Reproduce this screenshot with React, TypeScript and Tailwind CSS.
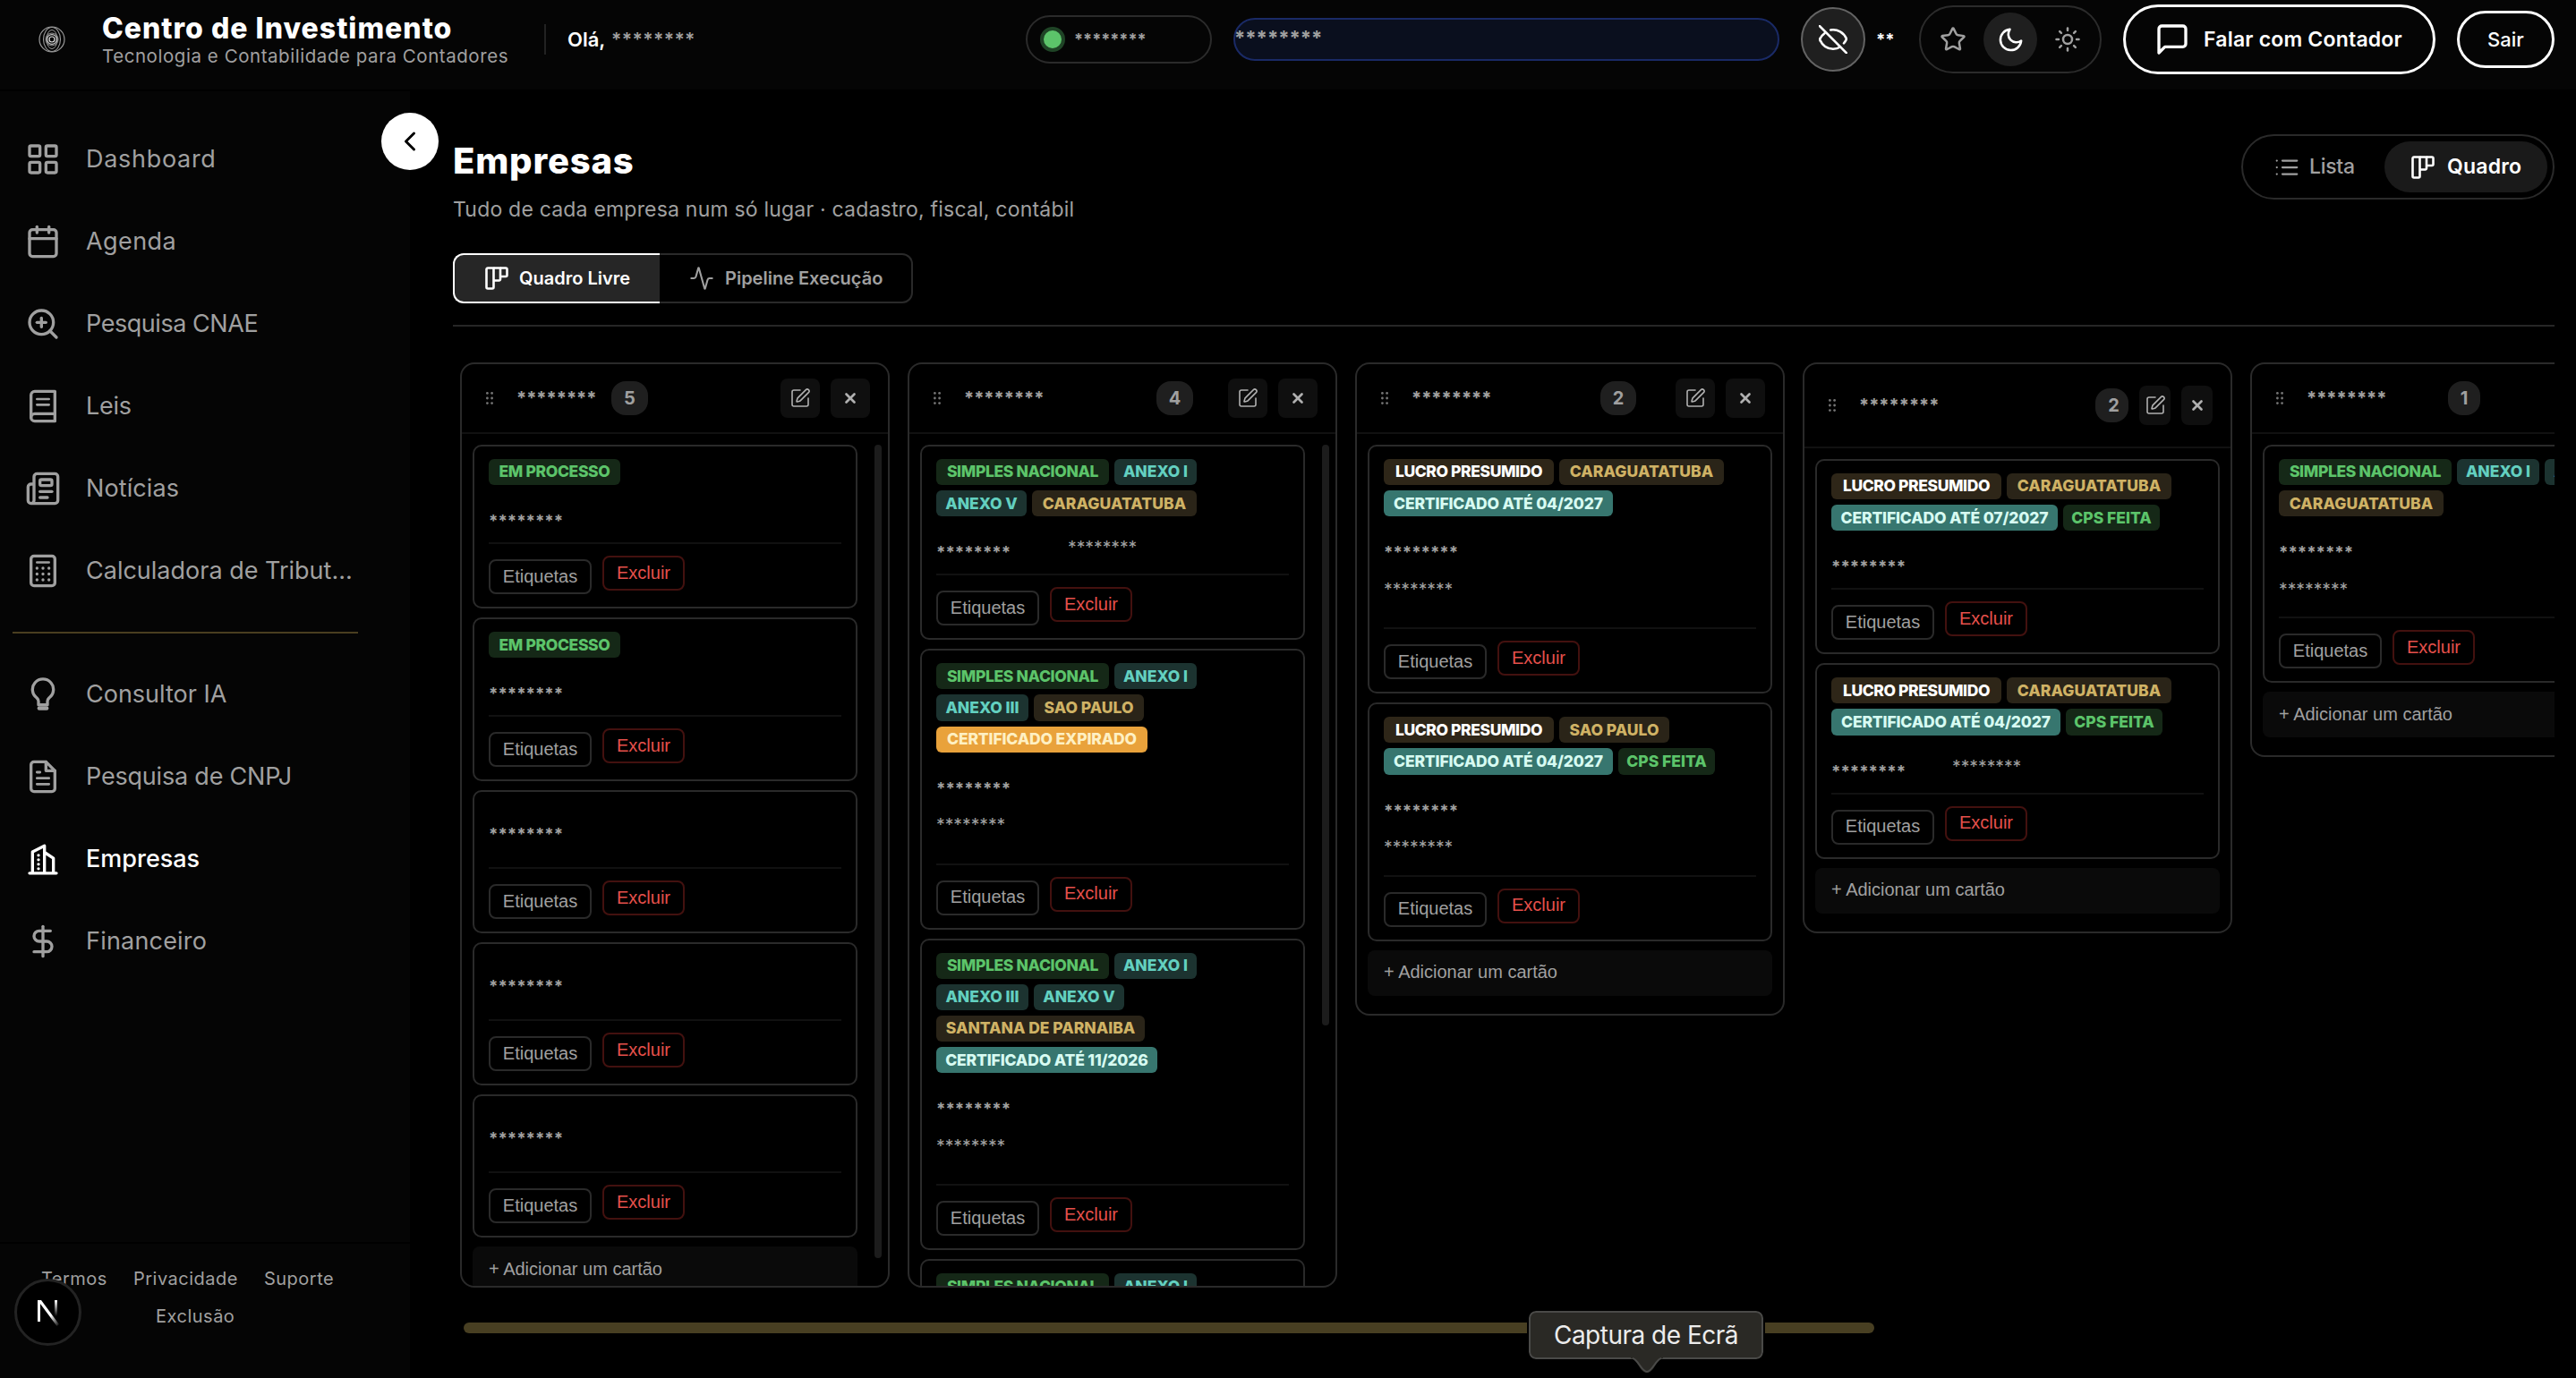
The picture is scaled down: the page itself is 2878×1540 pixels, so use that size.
import type { ReactNode } from 'react';
import {
  Activity,
  Calendar,
  ChevronLeft,
  DollarSign,
  LayoutGrid,
  Newspaper,
  SquarePen,
  Star,
  Sun,
  X,
  ZoomIn,
} from 'lucide-react';
import clsx from 'clsx';

interface IconProps {
  className?: string;
  strokeWidth?: number;
  children?: ReactNode;
}

function StrokeIcon({ className, strokeWidth = 2, children }: IconProps) {
  return (
    <svg
      viewBox="0 0 24 24"
      fill="none"
      stroke="currentColor"
      strokeWidth={strokeWidth}
      strokeLinecap="round"
      strokeLinejoin="round"
      className={clsx('shrink-0', className)}
    >
      {children}
    </svg>
  );
}

const BookIcon = () => (
  <StrokeIcon className="size-10">
    <path d="M4 19.5A2.5 2.5 0 0 1 6.5 17H20" />
    <path d="M6.5 2H20v20H6.5A2.5 2.5 0 0 1 4 19.5v-15A2.5 2.5 0 0 1 6.5 2z" />
    <path d="M8 7.2h8M8 11h8" strokeWidth={1.6} />
  </StrokeIcon>
);

const CalculatorIcon = () => (
  <StrokeIcon className="size-10">
    <rect x="4" y="2" width="16" height="20" rx="2" />
    <path d="M8 6.3h8" strokeWidth={1.6} />
    <path d="M8 10.2h.01M12 10.2h.01M16 10.2h.01M8 14.1h.01M12 14.1h.01M16 14.1h.01M8 18h.01M12 18h.01M16 18h.01" />
  </StrokeIcon>
);

const BulbIcon = () => (
  <StrokeIcon className="size-10">
    <path d="M9 19v-2.4c0-.9-.5-1.6-1.1-2.2a7 7 0 1 1 8.2 0c-.6.6-1.1 1.3-1.1 2.2V19z" />
    <path d="M9.5 21.3h5" strokeWidth={2.6} />
  </StrokeIcon>
);

const FileIcon = () => (
  <StrokeIcon className="size-10">
    <path d="M14 2H6a2 2 0 0 0-2 2v16a2 2 0 0 0 2 2h12a2 2 0 0 0 2-2V8z" />
    <path d="M14 2v6h6" />
    <path d="M16 13H8M16 17H8M10 9H8" strokeWidth={1.7} />
  </StrokeIcon>
);

const BuildingIcon = () => (
  <StrokeIcon className="size-10">
    <path d="M3 21.5h18M5 21V7.2l8-4V21M19 21V11.5l-6-4" />
    <path d="M9 9.5v.01M9 12.5v.01M9 15.5v.01M9 18.5v.01" />
  </StrokeIcon>
);

const BoardIcon = () => (
  <svg
    viewBox="0 0 26 26"
    fill="none"
    stroke="currentColor"
    strokeWidth={2.6}
    strokeLinejoin="round"
    className="size-[26px] shrink-0"
  >
    <path d="M1.5 3A1.5 1.5 0 0 1 3 1.5h6.5V23A1.5 1.5 0 0 1 8 24.5H3A1.5 1.5 0 0 1 1.5 23z" />
    <path d="M9.5 1.5H17V14a1.5 1.5 0 0 1-1.5 1.5h-6" />
    <path d="M17 1.5h6A1.5 1.5 0 0 1 24.500 3v6.5A1.5 1.5 0 0 1 23 11h-6" />
  </svg>
);

const ListIcon = () => (
  <StrokeIcon className="size-[30px]" strokeWidth={1.8}>
    <path d="M8 6h13M8 12h13M8 18h13M3 6h.01M3 12h.01M3 18h.01" />
  </StrokeIcon>
);

const EyeOffIcon = () => (
  <svg
    viewBox="0 0 32 32"
    fill="none"
    stroke="currentColor"
    strokeWidth={2.6}
    strokeLinecap="round"
    className="size-8"
  >
    <path d="M13.2 5.5C21 4.2 28 8.500 31 15.500c-.7 2-1.700 3.500-3 4.800" />
    <path d="M6.5 9.2C4 11 2 13.200 1 16c3.200 7.200 8 10.700 15 10.700 3 0 5.600-.7 8-2.200" />
    <path d="M.8 1 31.2 31.500" />
  </svg>
);

const Logo = () => (
  <svg viewBox="0 0 30 30" fill="none" stroke="#9a9a9a" className="size-[30px] shrink-0">
    <circle cx="15" cy="15" r="14" strokeWidth="1.2" />
    <ellipse cx="15" cy="15" rx="9.5" ry="13.5" strokeWidth="1.1" />
    <ellipse cx="15" cy="15" rx="6" ry="10.5" strokeWidth="1" />
    <circle cx="15" cy="15" r="7" strokeWidth="1" />
    <circle cx="15" cy="15" r="5.4" stroke="#d0d0d0" strokeWidth="1.2" />
    <circle cx="15" cy="15" r="3" stroke="#e0e0e0" strokeWidth="1.2" />
  </svg>
);

const Grip = () => (
  <svg viewBox="0 0 8 14" className="h-[14px] w-2 fill-[#757575]">
    {[1.4, 7, 12.6].map((y) => (
      <g key={y}>
        <circle cx="1.4" cy={y} r="1.4" />
        <circle cx="6.6" cy={y} r="1.4" />
      </g>
    ))}
  </svg>
);

const MASK = '********';

function Header() {
  return (
    <header className="h-[100px] shrink-0 bg-[#050505]">
      <div className="flex h-[88px] items-center pr-6 pl-[43px]">
        <Logo />
        <div className="ml-[41px] w-[454px] whitespace-nowrap">
          <div className="text-[32px] leading-[38px] font-extrabold tracking-[1px] text-white">
            Centro de Investimento
          </div>
          <div className="text-[20.5px] leading-6 tracking-[0.55px] text-[#a0a0a0]">
            Tecnologia e Contabilidade para Contadores
          </div>
        </div>
        <div className="ml-10 h-[34px] w-0.5 bg-[#222]" />
        <div className="ml-6 w-[49px] text-[22px] font-semibold text-white">Olá,</div>
        <span className="text-[21px] leading-none font-semibold tracking-[0.4px] text-[#a0a0a0]">
          {MASK}
        </span>

        <div className="ml-auto flex items-center gap-6">
          <div className="flex h-[54px] w-[208px] items-center rounded-full border-2 border-[#2b2b2b] pl-3.5">
            <div className="size-7 rounded-full border-4 border-[#1f4426] bg-[#5cc46a]" />
            <span className="ml-2.5 text-[18px] leading-none font-bold text-[#a0a0a0]">{MASK}</span>
          </div>
          <div className="flex h-12 w-[610px] items-center rounded-full border-2 border-[#1a2a66] bg-[#0a0f1e]">
            <span className="-ml-px -mt-1 text-[22px] leading-none font-bold text-[#a0a0a0]">
              {MASK}
            </span>
          </div>
          <div className="flex items-center gap-3">
            <button className="flex size-[72px] items-center justify-center rounded-full border-2 border-[#636363] bg-[#1f1f1f] text-white">
              <EyeOffIcon />
            </button>
            <span className="w-6 text-[18.5px] leading-none font-bold text-white">**</span>
          </div>
          <div className="flex h-[76px] w-[204px] items-center justify-between rounded-full border-2 border-[#2b2b2b] px-[21px] text-[#a0a0a0]">
            <Star className="size-[30px]" strokeWidth={2} />
            <div className="flex size-[60px] items-center justify-center rounded-full bg-[#1f1f1f] text-white">
              <StrokeIcon className="size-[31px]" strokeWidth={2}>
                <path d="M21 12.79A9 9 0 1 1 11.21 3 7 7 0 0 0 21 12.79z" />
              </StrokeIcon>
            </div>
            <Sun className="size-[30px]" strokeWidth={2} />
          </div>
          <button className="flex h-[78px] w-[349px] items-center rounded-full border-3 border-white pl-8 text-[23px] font-semibold tracking-[0.2px] text-white">
            <StrokeIcon className="size-10">
              <path d="M21 15a2 2 0 0 1-2 2H7l-4 4V5a2 2 0 0 1 2-2h14a2 2 0 0 1 2 2z" />
            </StrokeIcon>
            <span className="ml-[15px] whitespace-nowrap">Falar com Contador</span>
          </button>
          <button className="h-16 w-[109px] rounded-full border-3 border-white text-[22px] font-medium text-white">
            Sair
          </button>
        </div>
      </div>
    </header>
  );
}

const iconClass = 'size-10 shrink-0';

const mainNav = [
  { label: 'Dashboard', icon: <LayoutGrid className={iconClass} />, track: 'tracking-[0.7px]' },
  { label: 'Agenda', icon: <Calendar className={iconClass} />, track: 'tracking-[0.4px]' },
  { label: 'Pesquisa CNAE', icon: <ZoomIn className={iconClass} />, track: 'tracking-[-0.45px]' },
  { label: 'Leis', icon: <BookIcon />, track: 'tracking-[-0.3px]' },
  { label: 'Notícias', icon: <Newspaper className={iconClass} />, track: 'tracking-[0.1px]' },
  { label: 'Calculadora de Tribut...', icon: <CalculatorIcon />, track: '' },
];

const toolsNav = [
  { label: 'Consultor IA', icon: <BulbIcon />, track: '' },
  { label: 'Pesquisa de CNPJ', icon: <FileIcon />, track: 'tracking-[-0.2px]' },
  { label: 'Empresas', icon: <BuildingIcon />, track: '', active: true },
  { label: 'Financeiro', icon: <DollarSign className={iconClass} />, track: 'tracking-[0.2px]' },
];

interface NavItemProps {
  label: string;
  icon: ReactNode;
  track: string;
  active?: boolean;
}

function NavItem({ label, icon, track, active }: NavItemProps) {
  return (
    <a
      className={clsx(
        'flex h-[72px] items-center gap-7 pl-7 text-[27px] whitespace-nowrap',
        track,
        active ? 'font-medium text-white' : 'text-[#a0a0a0]',
      )}
    >
      {icon}
      {label}
    </a>
  );
}

function Sidebar() {
  return (
    <aside className="relative flex w-[458px] shrink-0 flex-col bg-[#050505]">
      <button className="absolute top-6 left-[426px] z-10 flex size-16 items-center justify-center rounded-full bg-white text-black">
        <ChevronLeft className="size-9" strokeWidth={2} />
      </button>
      <nav className="flex flex-1 flex-col gap-5 pt-10">
        {mainNav.map((item) => (
          <NavItem key={item.label} {...item} />
        ))}
        <div className="my-3 ml-3.5 h-0.5 w-[386px] bg-[#4a3e20]" />
        {toolsNav.map((item) => (
          <NavItem key={item.label} {...item} />
        ))}
      </nav>
      <footer className="h-[152px] border-t-2 border-black pt-[18px] text-[20px] leading-[42px] tracking-[0.5px] text-[#a0a0a0]">
        <div className="flex gap-[29px] pl-[46px]">
          <span>Termos</span>
          <span>Privacidade</span>
          <span>Suporte</span>
        </div>
        <div className="pl-[174px]">Exclusão</div>
      </footer>
      <div className="absolute bottom-9 left-4 flex size-[75px] items-center justify-center rounded-full border-3 border-[#232323] bg-black">
        <svg viewBox="0 0 26 30" fill="none" className="h-[30px] w-[26px]">
          <defs>
            <linearGradient id="stem" x1="0" y1="0" x2="0" y2="1">
              <stop offset="0" stopColor="#fff" />
              <stop offset="1" stopColor="#fff" stopOpacity="0" />
            </linearGradient>
            <linearGradient id="diag" x1="0" y1="0" x2="1" y2="1">
              <stop offset=".6" stopColor="#fff" />
              <stop offset="1" stopColor="#fff" stopOpacity="0" />
            </linearGradient>
          </defs>
          <rect x="1" y="1" width="3" height="24" fill="#fff" />
          <path d="M1 1h4l20 27-2.5 2z" fill="url(#diag)" />
          <rect x="20" y="1" width="3" height="18" fill="url(#stem)" />
        </svg>
      </div>
    </aside>
  );
}

const green = 'bg-[#152817] text-[#5cc46a]';
const teal = 'bg-[#1c3330] text-[#63d0c0]';
const gold = 'bg-[#2a2418] text-[#cfb265]';
const cert = 'bg-[#37766f] text-[#d7fbf2]';

const chipStyles: Record<string, string> = {
  'EM PROCESSO': clsx('w-[147px] tracking-[-0.35px]', green),
  'SIMPLES NACIONAL': clsx('w-[193px] tracking-[-0.35px]', green),
  'CPS FEITA': clsx('w-[108px]', green),
  'ANEXO I': clsx('w-[92px]', teal),
  'ANEXO III': clsx('w-[103px]', teal),
  'ANEXO V': clsx('w-[101px]', teal),
  CARAGUATATUBA: clsx('w-[184px] tracking-[0.1px]', gold),
  'SAO PAULO': clsx('w-[123px]', gold),
  'SANTANA DE PARNAIBA': clsx('w-[233px]', gold),
  'LUCRO PRESUMIDO': 'w-[190px] tracking-[-0.4px] bg-[#2e2618] text-white',
  'CERTIFICADO EXPIRADO': 'w-[236px] tracking-[-0.15px] bg-[#e9a23b] text-[#fef0c3]',
  'CERTIFICADO ATÉ 04/2027': clsx('w-[256px] tracking-[-0.15px]', cert),
  'CERTIFICADO ATÉ 07/2027': clsx('w-[253px] tracking-[-0.15px]', cert),
  'CERTIFICADO ATÉ 11/2026': clsx('w-[247px] tracking-[-0.15px]', cert),
};

interface CardData {
  chips?: string[];
  // size of the text area between the labels and the card actions
  body: string;
  sub?: boolean;
  inlineSub?: string;
}

interface ColumnData {
  id: string;
  count: number;
  nameWidth: string;
  badge: string;
  button?: string;
  header?: string;
  height?: string;
  scrollbar?: string;
  cards: CardData[];
}

const columns: ColumnData[] = [
  {
    id: 'c1',
    count: 5,
    nameWidth: 'w-[106px]',
    badge: 'w-[41px]',
    height: 'h-[1034px]',
    scrollbar: 'h-[909px]',
    cards: [
      { chips: ['EM PROCESSO'], body: 'h-[66px] pt-[31px]' },
      { chips: ['EM PROCESSO'], body: 'h-[66px] pt-[31px]' },
      { body: 'h-[72px] pt-6' },
      { body: 'h-[72px] pt-6' },
      { body: 'h-[72px] pt-6' },
    ],
  },
  {
    id: 'c2',
    count: 4,
    nameWidth: 'w-[215px]',
    badge: 'w-[41px]',
    height: 'h-[1034px]',
    scrollbar: 'h-[649px]',
    cards: [
      {
        chips: ['SIMPLES NACIONAL', 'ANEXO I', 'ANEXO V', 'CARAGUATATUBA'],
        body: 'h-[66px] pt-[31px]',
        inlineSub: 'ml-[64px]',
      },
      {
        chips: ['SIMPLES NACIONAL', 'ANEXO I', 'ANEXO III', 'SAO PAULO', 'CERTIFICADO EXPIRADO'],
        body: 'h-[126px] pt-[31px]',
        sub: true,
      },
      {
        chips: [
          'SIMPLES NACIONAL',
          'ANEXO I',
          'ANEXO III',
          'ANEXO V',
          'SANTANA DE PARNAIBA',
          'CERTIFICADO ATÉ 11/2026',
        ],
        body: 'h-[126px] pt-[31px]',
        sub: true,
      },
      { chips: ['SIMPLES NACIONAL', 'ANEXO I'], body: 'h-[66px] pt-[31px]' },
    ],
  },
  {
    id: 'c3',
    count: 2,
    nameWidth: 'w-[211px]',
    badge: 'w-[40px]',
    cards: [
      {
        chips: ['LUCRO PRESUMIDO', 'CARAGUATATUBA', 'CERTIFICADO ATÉ 04/2027'],
        body: 'h-[126px] pt-[31px]',
        sub: true,
      },
      {
        chips: ['LUCRO PRESUMIDO', 'SAO PAULO', 'CERTIFICADO ATÉ 04/2027', 'CPS FEITA'],
        body: 'h-[114px] pt-[31px]',
        sub: true,
      },
    ],
  },
  {
    id: 'c4',
    count: 2,
    nameWidth: 'w-[264px]',
    badge: 'w-[37px] pl-1',
    button: 'w-[35px]',
    header: 'h-[94px]',
    cards: [
      {
        chips: ['LUCRO PRESUMIDO', 'CARAGUATATUBA', 'CERTIFICADO ATÉ 07/2027', 'CPS FEITA'],
        body: 'h-[66px] pt-[31px]',
      },
      {
        chips: ['LUCRO PRESUMIDO', 'CARAGUATATUBA', 'CERTIFICADO ATÉ 04/2027', 'CPS FEITA'],
        body: 'h-[66px] pt-[31px]',
        inlineSub: 'ml-[52px]',
      },
    ],
  },
  {
    id: 'c5',
    count: 1,
    nameWidth: 'w-[158px]',
    badge: 'w-[36px]',
    cards: [
      {
        chips: ['SIMPLES NACIONAL', 'ANEXO I', 'ANEXO V', 'CARAGUATATUBA'],
        body: 'h-[114px] pt-[31px]',
        sub: true,
      },
    ],
  },
];

function Card({ chips, body, sub, inlineSub }: CardData) {
  return (
    <article className="shrink-0 rounded-[10px] border-2 border-[#2a2a2a] px-4 py-3.5">
      {chips && (
        <div className="flex flex-wrap gap-1.5">
          {chips.map((chip) => (
            <span
              key={chip}
              className={clsx(
                'flex h-[29.15px] items-center justify-center rounded-md text-[17.5px] font-extrabold whitespace-nowrap',
                chipStyles[chip],
              )}
            >
              {chip}
            </span>
          ))}
        </div>
      )}
      <div className={clsx('border-b-2 border-[#111] text-[#a0a0a0]', body)}>
        <div className="flex">
          <span className="w-[83px] text-[18.6px] leading-none font-bold">{MASK}</span>
          {inlineSub && (
            <span className={clsx('-mt-1.5 text-[19.3px] leading-none', inlineSub)}>{MASK}</span>
          )}
        </div>
        {sub && <div className="mt-[22px] text-[19.3px] leading-none">{MASK}</div>}
      </div>
      <div className="mt-[13px] flex gap-3 font-['Liberation_Sans',Arial,sans-serif] text-[20px]">
        <button className="mt-1 h-[39px] w-[115px] rounded-lg border-2 border-[#2a2a2a] pb-0.5 text-[#a0a0a0]">
          Etiquetas
        </button>
        <button className="h-[39px] w-[92px] rounded-lg border-2 border-[#43110f] pb-0.5 text-[#e5504b]">
          Excluir
        </button>
      </div>
    </article>
  );
}

function Column({ count, nameWidth, badge, button = 'w-11', header, height, scrollbar, cards }: ColumnData) {
  return (
    <section
      className={clsx(
        'flex w-[480px] shrink-0 flex-col overflow-hidden rounded-[16px] border-2 border-[#2a2a2a]',
        height,
      )}
    >
      <div
        className={clsx(
          'flex shrink-0 items-center border-b-2 border-[#111] pr-5 pl-[27px]',
          header ?? 'h-[78px]',
        )}
      >
        <Grip />
        <span
          className={clsx(
            'ml-[26px] shrink-0 text-[20px] leading-none font-bold text-[#a0a0a0]',
            nameWidth,
          )}
        >
          {MASK}
        </span>
        <span
          className={clsx(
            'flex h-[38px] shrink-0 items-center justify-center rounded-[16px] bg-[#1f1f1f] text-[20px] font-bold text-[#a0a0a0]',
            badge,
          )}
        >
          {count}
        </span>
        <div className="ml-auto flex gap-3 text-[#b0b0b0]">
          <button
            className={clsx('flex h-11 items-center justify-center rounded-lg bg-[#0f0f0f]', button)}
          >
            <SquarePen className="size-6 shrink-0" strokeWidth={1.6} />
          </button>
          <button
            className={clsx('flex h-11 items-center justify-center rounded-lg bg-[#0f0f0f]', button)}
          >
            <X className="size-[18px] shrink-0" strokeWidth={3.6} />
          </button>
        </div>
      </div>
      <div className={clsx('flex min-h-0 flex-1 items-start px-3 pt-3', !scrollbar && 'pb-5')}>
        <div className={clsx('flex shrink-0 flex-col gap-2.5', scrollbar ? 'w-[430px]' : 'w-[452px]')}>
          {cards.map((card, i) => (
            <Card key={i} {...card} />
          ))}
          <button className="h-[51px] rounded-lg bg-[#0a0a0a] pb-0.5 pl-[18px] text-left font-['Liberation_Sans',Arial,sans-serif] text-[20px] text-[#a0a0a0]">
            + Adicionar um cartão
          </button>
        </div>
        {scrollbar && (
          <div className={clsx('ml-[19px] w-2 shrink-0 rounded-full bg-[#1c1c1c]', scrollbar)} />
        )}
      </div>
    </section>
  );
}

function Board() {
  return (
    <div className="mt-10 flex h-[1073px] shrink-0 items-start gap-5 overflow-hidden pl-2">
      {columns.map((column) => (
        <Column key={column.id} {...column} />
      ))}
    </div>
  );
}

export default function App() {
  return (
    <div className="relative flex h-[1540px] w-[2878px] flex-col overflow-hidden bg-black font-['Inter',sans-serif] text-[#a0a0a0]">
      <Header />
      <div className="flex min-h-0 flex-1 pt-0.5">
        <Sidebar />
        <main className="flex min-w-0 flex-1 flex-col pt-12 pr-6 pl-12">
          <div className="flex items-start justify-between">
            <div>
              <h1 className="text-[40px] leading-[60px] font-extrabold tracking-[0.8px] text-white">
                Empresas
              </h1>
              <p className="mt-1.5 text-[23px] leading-9 tracking-[0.2px]">
                Tudo de cada empresa num só lugar · cadastro, fiscal, contábil
              </p>
            </div>
            <div className="flex h-[73px] w-[350px] items-center rounded-full border-2 border-[#2a2a2a] pr-1.5 pl-[34px] text-[23px]">
              <ListIcon />
              <span className="ml-2.5 font-medium tracking-[-0.3px]">Lista</span>
              <div className="ml-auto flex h-[57px] w-[182px] items-center gap-3.5 rounded-full bg-[#1a1a1a] pl-[30px] font-semibold tracking-[0.2px] text-white">
                <BoardIcon />
                Quadro
              </div>
            </div>
          </div>

          <div className="mt-[31px] flex h-14 shrink-0 text-[20px] font-semibold">
            <button className="flex w-[231px] items-center gap-3 rounded-l-xl border-2 border-r-0 border-white bg-[#262626] pl-[34px] text-white">
              <BoardIcon />
              Quadro Livre
            </button>
            <button className="flex w-[283px] items-center gap-3 rounded-r-xl border-2 border-l-0 border-[#2a2a2a] pl-[33px]">
              <Activity className="size-7" strokeWidth={1.8} />
              Pipeline Execução
            </button>
          </div>
          <div className="mt-6 h-0.5 shrink-0 bg-[#262626]" />

          <Board />
          <div className="ml-3 h-3 w-[1576px] shrink-0 rounded-full bg-[#483f22]" />
        </main>
      </div>

      <div className="absolute top-[1465px] left-[1708px]">
        <div className="flex h-[54px] w-[262px] items-center justify-center rounded-lg border-2 border-[#4a4a48] bg-[#2a2925] text-[28px] tracking-[-0.5px] text-[#ececec] outline-2 outline-black">
          Captura de Ecrã
        </div>
        <svg viewBox="0 0 36 20" className="absolute top-[51px] left-[114px] h-5 w-9">
          <path d="M0 0v2c8 0 9 16 18 16S28 2 36 2V0z" fill="#2a2925" />
          <path d="M2 2c6 1 10 15 16 15S28 3 34 2" fill="none" stroke="#4a4a48" strokeWidth="2" />
        </svg>
      </div>
    </div>
  );
}
